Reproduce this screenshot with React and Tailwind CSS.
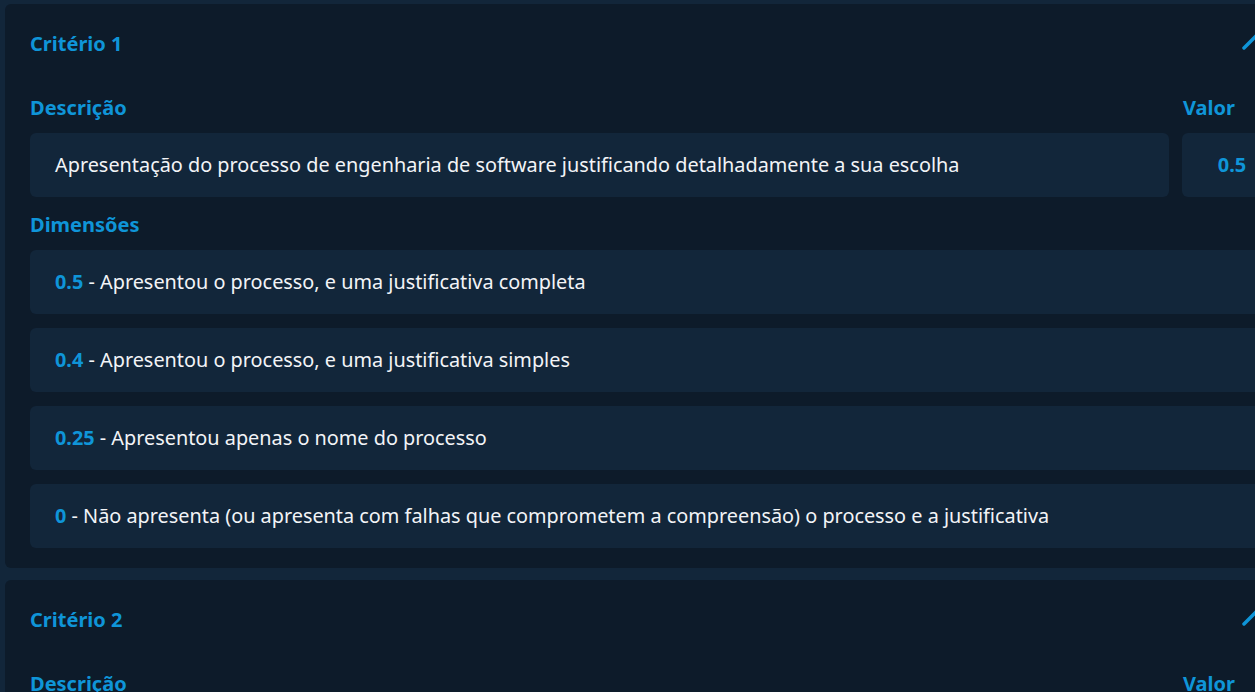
import { ChevronUp } from 'lucide-react';

const criteria = [
    {
        title: 'Critério 1',
        description: 'Apresentação do processo de engenharia de software justificando detalhadamente a sua escolha',
        value: '0.5',
        dimensions: [
            { value: '0.5', text: 'Apresentou o processo, e uma justificativa completa' },
            { value: '0.4', text: 'Apresentou o processo, e uma justificativa simples' },
            { value: '0.25', text: 'Apresentou apenas o nome do processo' },
            { value: '0', text: 'Não apresenta (ou apresenta com falhas que comprometem a compreensão) o processo e a justificativa' },
        ],
    },
    {
        title: 'Critério 2',
        description: 'Modelagem dos requisitos do sistema',
        value: '0.5',
        dimensions: [
            { value: '0.5', text: 'Apresentou os requisitos de forma completa' },
            { value: '0', text: 'Não apresenta os requisitos' },
        ],
    },
];

function CriterionCard({ criterion }) {
    const { title, description, value, dimensions } = criterion;

    return (
        <div className="w-[1302px] shrink-0 rounded-md bg-[#0d1b2a] px-[25px] pt-[26px] pb-[20px]">
            {/* Header */}
            <div className="flex h-[28px] items-center justify-between">
                <h3 className="text-[20px] font-bold leading-[28px] text-[#0f95d8]">{title}</h3>
                <button className="-mt-[17px] -mb-[11px] -mr-[4px] text-[#0f95d8]">
                    <ChevronUp size={56} strokeWidth={1.5} />
                </button>
            </div>

            {/* Description + value */}
            <div className="mt-[36px] grid grid-cols-[1fr_100px] gap-x-[13px]">
                <span className="text-[20px] font-bold leading-[28px] text-[#0f95d8]">Descrição</span>
                <span className="pl-px text-[20px] font-bold leading-[28px] text-[#0f95d8]">Valor</span>
                <div className="mt-[11px] flex h-[64px] items-center rounded-md bg-[#12263a] px-[25px] text-[19.85px] text-[#f2f4f7]">
                    {description}
                </div>
                <div className="mt-[11px] flex h-[64px] items-center justify-center rounded-md bg-[#12263a] text-[20px] font-bold text-[#0f95d8]">
                    {value}
                </div>
            </div>

            {/* Dimensions */}
            <div className="mt-[14px] text-[20px] font-bold leading-[28px] text-[#0f95d8]">Dimensões</div>
            <div className="mt-[11px] flex flex-col gap-[14px]">
                {dimensions.map((dim, idx) => (
                    <div key={idx} className="flex h-[64px] items-center rounded-md bg-[#12263a] px-[25px] text-[19.85px] text-[#f2f4f7]">
                        <span className="font-bold text-[#0f95d8]">{dim.value}</span>
                        <span className="whitespace-pre"> - {dim.text}</span>
                    </div>
                ))}
            </div>
        </div>
    );
}

export default function App() {
    return (
        <div
            className="h-screen w-screen overflow-hidden bg-[#12263a] pt-[4px] pl-[5px]"
            style={{ fontFamily: '"Noto Sans", "Open Sans", sans-serif' }}
        >
            <div className="flex flex-col gap-3">
                {criteria.map((c, idx) => (
                    <CriterionCard key={idx} criterion={c} />
                ))}
            </div>
        </div>
    );
}
